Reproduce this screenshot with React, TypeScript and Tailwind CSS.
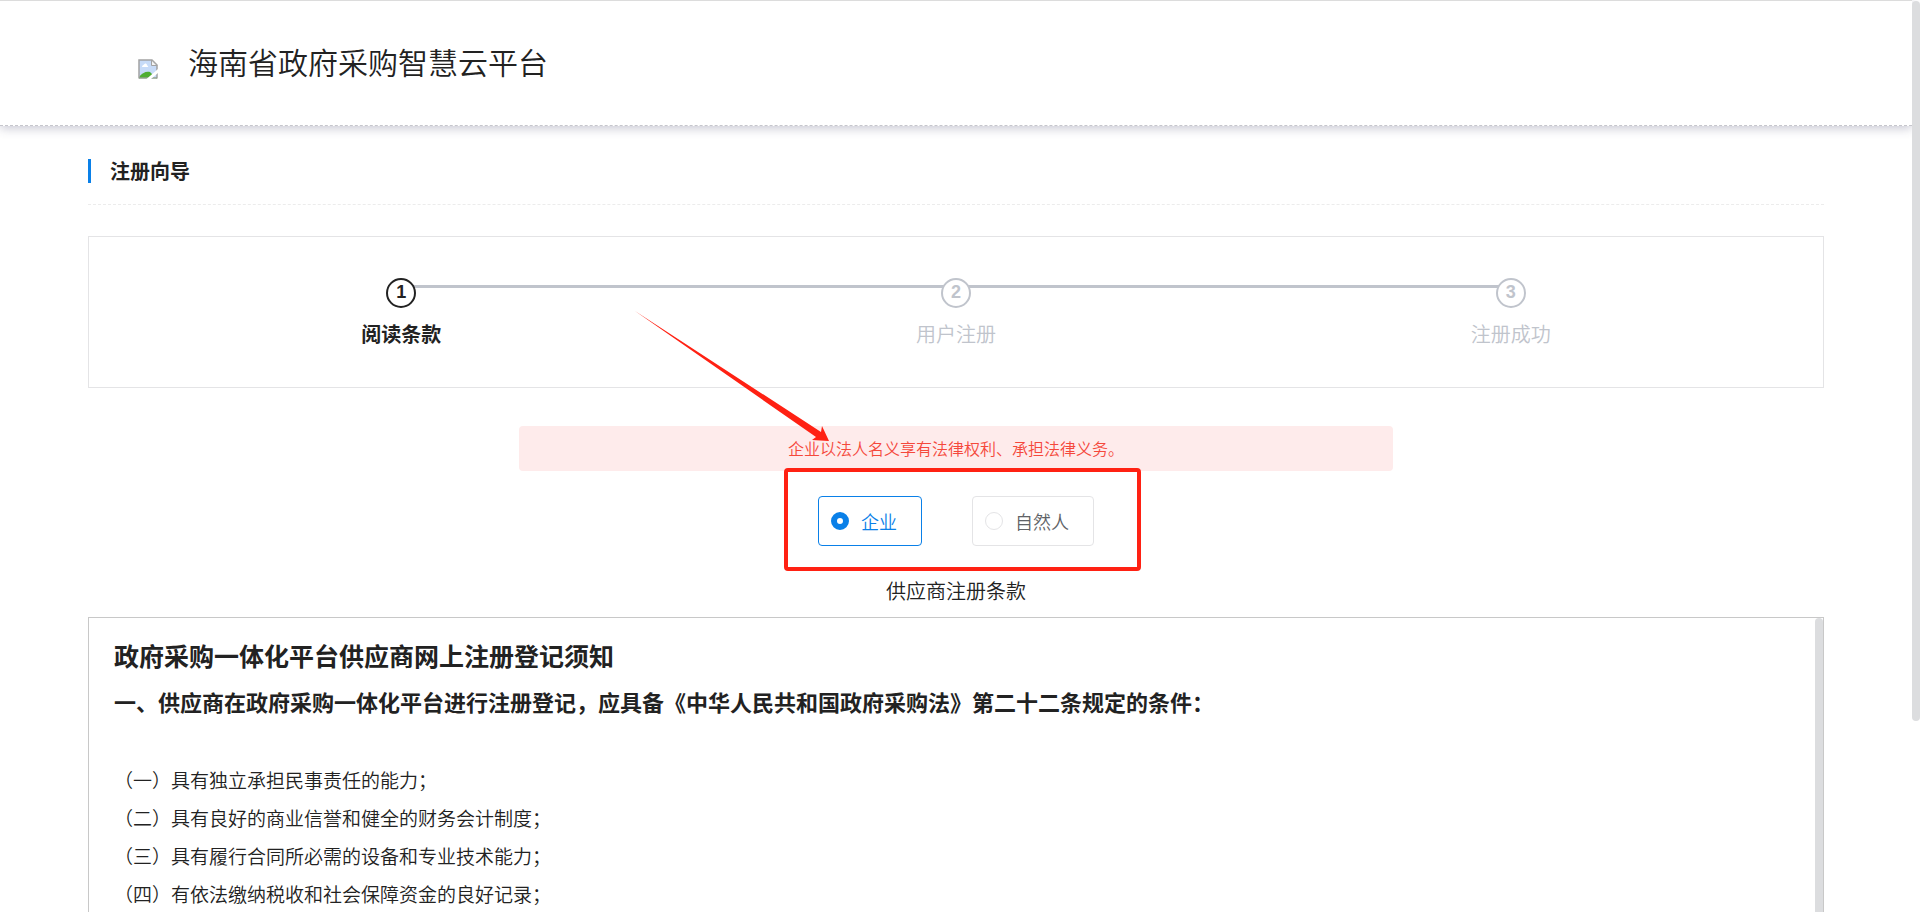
import React, { useState } from 'react';
import clsx from 'clsx';

const steps = ['阅读条款', '用户注册', '注册成功'];

const supplierTypes = [
    { value: 'company', label: '企业' },
    { value: 'person', label: '自然人' },
];

const conditions = [
    '（一）具有独立承担民事责任的能力；',
    '（二）具有良好的商业信誉和健全的财务会计制度；',
    '（三）具有履行合同所必需的设备和专业技术能力；',
    '（四）有依法缴纳税收和社会保障资金的良好记录；',
];

const BrokenImageIcon: React.FC = () => (
    <svg width="20" height="20" viewBox="0 0 20 20" fill="none" role="img" aria-label="logo">
        <path d="M1 1H14L19 6V19H1Z" fill="#c7dbf8" />
        <path d="M4 8C4 6 6 6 6.500 5C8 4 9 5 9 6.500C10.500 6.500 10.500 8 9.500 8Z" fill="#fff" />
        <path d="M1 19V18C4 14 8 12 12 13L15 16L11 19Z" fill="#4fae32" />
        <path d="M1 19.500V1H14L19 6V19.500" stroke="#a3a3a3" strokeWidth="1.500" />
        <path d="M1 19H19" stroke="#8fa08c" strokeWidth="1.500" />
        <path d="M13.500 1V6.500H19Z" fill="#f4f4f4" stroke="#a3a3a3" />
        <path d="M20 10L8.500 20H13L20 14Z" fill="#fff" />
    </svg>
);

const Header: React.FC = () => (
    <header className="border-t border-t-[#dcdcdc] border-b border-dashed border-b-[#c6c6cc] [border-top-style:solid] shadow-[0_2px_10px_rgba(60,60,100,0.3)]">
        <div className="flex h-[124px] items-center px-[138px] pb-1">
            <div className="mt-4 mr-[30px]">
                <BrokenImageIcon />
            </div>
            <h1 className="text-[30px] leading-10">海南省政府采购智慧云平台</h1>
        </div>
    </header>
);

const Steps: React.FC<{ current: number }> = ({ current }) => (
    <ol className="mt-[31px] flex border border-[#e4e4e6] px-[35px] pt-[41px] pb-[38px]">
        {steps.map((step, index) => (
            <li
                key={step}
                className={clsx(
                    'relative flex h-[71px] flex-1 flex-col items-center',
                    index === current ? 'font-bold text-[#222]' : 'text-[#c0c4cc]',
                )}
            >
                {index < steps.length - 1 && (
                    <span className="absolute top-[7px] left-1/2 h-[3px] w-full bg-[#c0c4cc]" />
                )}
                <span className="relative z-10 flex size-[30px] justify-center rounded-full border-2 border-current bg-white text-[18px] leading-6 font-bold font-['Liberation_Sans',Arial,sans-serif]">
                    {index + 1}
                </span>
                <span className="mt-3 text-xl leading-7">{step}</span>
            </li>
        ))}
    </ol>
);

const SupplierTypeRadios: React.FC = () => {
    const [selected, setSelected] = useState('company');
    return (
        <div className="relative mx-auto mt-[25px] flex w-fit gap-[50px]">
            {supplierTypes.map(({ value, label }) => (
                <label
                    key={value}
                    className={clsx(
                        'flex h-[50px] cursor-pointer items-center gap-3 rounded border pr-6 pl-3 text-lg',
                        selected === value ? 'border-[#0a80e8] text-[#0a80e8]' : 'border-[#e4e4e6] text-[#606266]',
                    )}
                >
                    <input
                        type="radio"
                        name="supplierType"
                        value={value}
                        checked={selected === value}
                        onChange={() => setSelected(value)}
                        className="size-[18px] appearance-none rounded-full border border-[#e4e4e6] bg-white checked:border-[6px] checked:border-[#0a80e8]"
                    />
                    {label}
                </label>
            ))}
            <div className="pointer-events-none absolute -top-7 -right-[47px] -bottom-[25px] -left-[34px] rounded border-4 border-[#ff2113]" />
        </div>
    );
};

const Terms: React.FC = () => (
    <div className="mt-3 flex min-h-0 flex-1 border border-b-0 border-[#c8c8c8]">
        <div className="flex-1 overflow-hidden px-[25px] pt-3.5">
            <h2 className="text-[25px] leading-[46px] font-bold">政府采购一体化平台供应商网上注册登记须知</h2>
            <h3 className="text-[22px] leading-[46px] font-bold">
                一、供应商在政府采购一体化平台进行注册登记，应具备《中华人民共和国政府采购法》第二十二条规定的条件：
            </h3>
            <ul className="mt-[37px] text-[19px] leading-[38px]">
                {conditions.map((condition) => (
                    <li key={condition}>{condition}</li>
                ))}
            </ul>
        </div>
        <div className="w-2 rounded-t-full bg-[#dcdddf]" />
    </div>
);

// Red pointer from the step bar down to the supplier type notice
const Arrow: React.FC = () => (
    <svg
        className="pointer-events-none absolute -top-[115px] left-[116px]"
        width="200"
        height="134"
        viewBox="635 311 200 134"
        fill="#ff2113"
    >
        <path d="M635 311L821 432L822 426L829 441L812 440L816 437Z" />
    </svg>
);

const App: React.FC = () => (
    <div className="flex h-screen overflow-hidden bg-white font-[350] text-[#222] font-['Noto_Sans_CJK_SC',sans-serif]">
        <div className="flex min-w-0 flex-1 flex-col">
            <Header />
            <main className="flex min-h-0 flex-1 flex-col px-[88px]">
                <div className="flex h-[79px] items-center border-b border-dashed border-[#ececec] pt-3">
                    <h2 className="border-l-[3px] border-[#0a80e8] pl-[19px] text-xl leading-6 font-bold">注册向导</h2>
                </div>
                <Steps current={0} />
                <div className="relative mx-auto mt-[38px] w-[874px] rounded bg-[#feebeb] text-center text-base leading-[45px] text-[#f5483b]">
                    企业以法人名义享有法律权利、承担法律义务。
                    <Arrow />
                </div>
                <SupplierTypeRadios />
                <p className="mt-[31px] text-center text-xl leading-7">供应商注册条款</p>
                <Terms />
            </main>
        </div>
        <div className="w-2 pt-px">
            <div className="h-[79%] rounded-full bg-[#dcdddf]" />
        </div>
    </div>
);

export default App;
